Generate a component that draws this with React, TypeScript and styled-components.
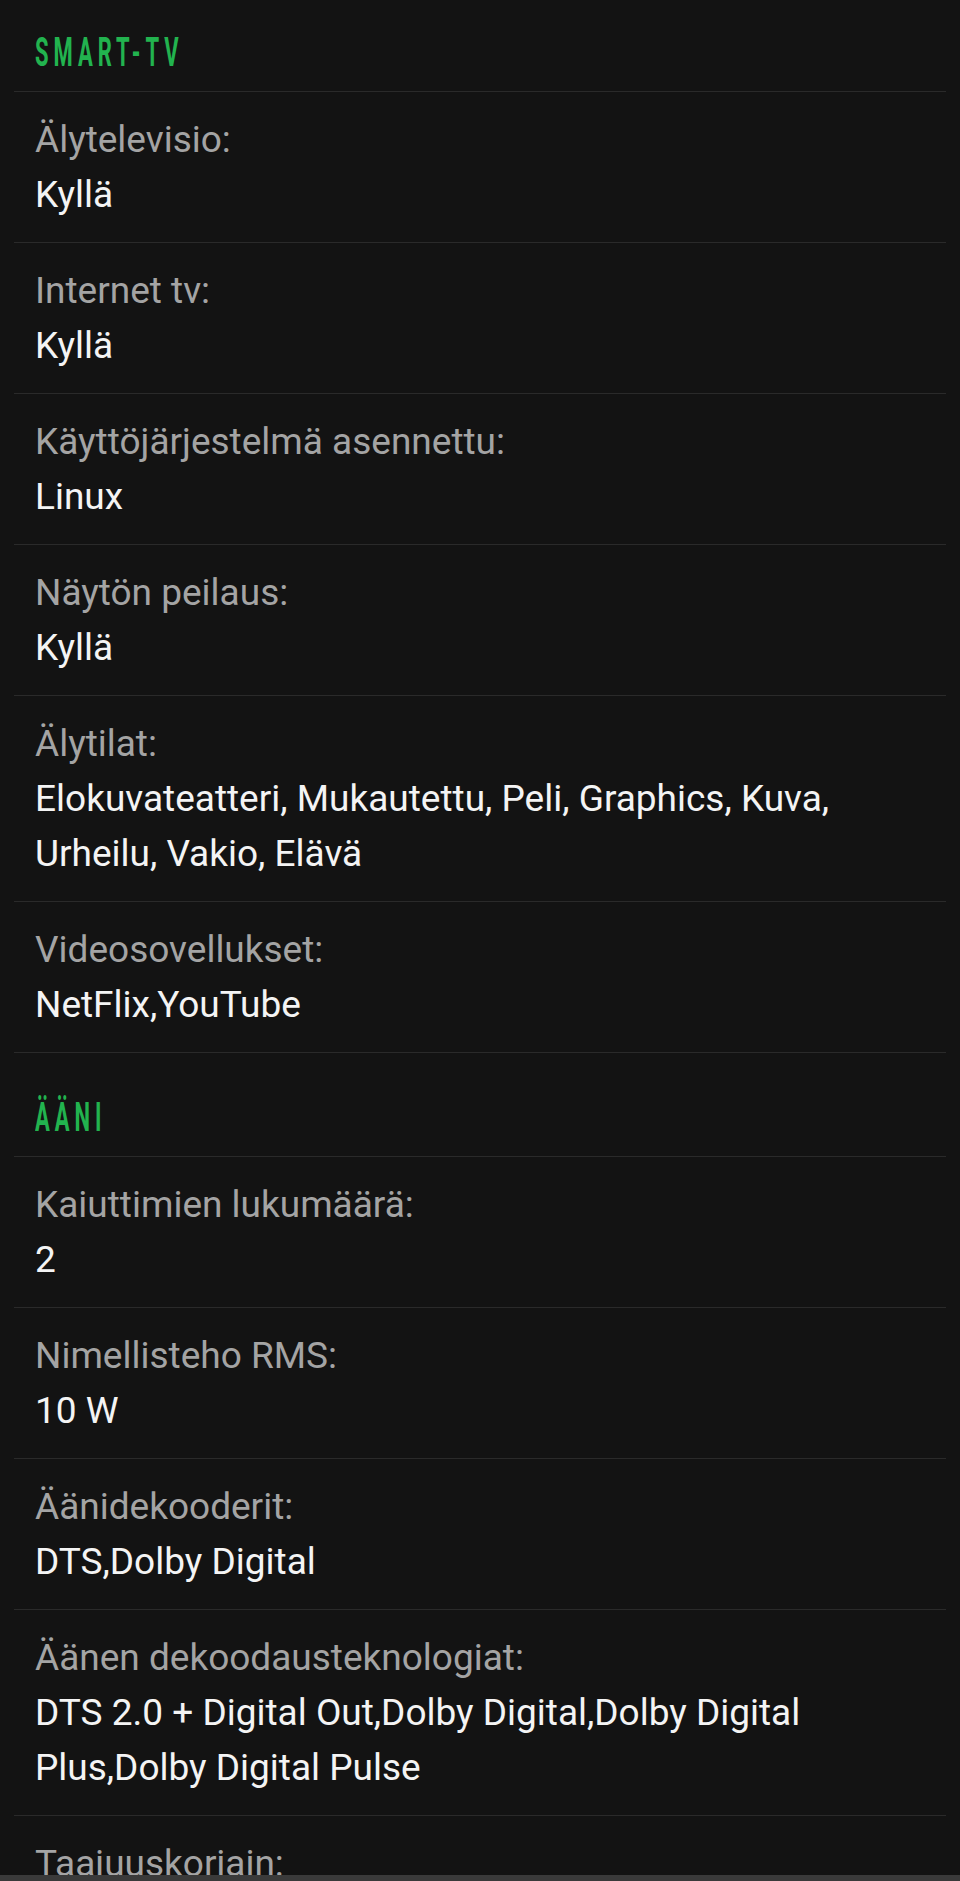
import React from 'react'
import styled, { createGlobalStyle } from 'styled-components'

const GlobalStyle = createGlobalStyle`
  html, body {
    margin: 0;
    padding: 0;
    background: #131313;
  }
  * { box-sizing: border-box; }
`

const Page = styled.div`
  height: 1881px;
  display: flex;
  flex-direction: column;
  overflow: hidden;
  background: #131313;
  font-family: Roboto, "Noto Sans", sans-serif;
`

const List = styled.div`
  flex: 1;
  overflow: hidden;
  padding: 0 14px;
`

const SectionTitle = styled.div<{ $first?: boolean }>`
  padding: ${p => (p.$first ? '28px' : '40px')} 21px 13px;
  border-bottom: 1px solid #2a2a2a;
  height: ${p => (p.$first ? '92px' : '104px')};
`

const TitleText = styled.span`
  display: inline-block;
  font-size: 40px;
  line-height: 50px;
  font-weight: 700;
  letter-spacing: 9px;
  color: #22b34f;
  text-transform: uppercase;
  transform: scaleX(0.55);
  transform-origin: left center;
  white-space: nowrap;
`

const Row = styled.div`
  padding: 20px 21px;
  border-bottom: 1px solid #2a2a2a;
`

const Label = styled.div`
  font-size: 37px;
  line-height: 55px;
  color: #a4a4a4;
`

const Value = styled.div`
  font-size: 37px;
  line-height: 55px;
  color: #f4f4f4;
  padding-right: 40px;
`

const BottomBar = styled.div`
  height: 6px;
  flex-shrink: 0;
  background: #3a3a3a;
`

type Spec = { label: string; value?: string }
type Section = { title: string; rows: Spec[] }

const sections: Section[] = [
  {
    title: 'Smart-TV',
    rows: [
      { label: 'Älytelevisio:', value: 'Kyllä' },
      { label: 'Internet tv:', value: 'Kyllä' },
      { label: 'Käyttöjärjestelmä asennettu:', value: 'Linux' },
      { label: 'Näytön peilaus:', value: 'Kyllä' },
      { label: 'Älytilat:', value: 'Elokuvateatteri, Mukautettu, Peli, Graphics, Kuva, Urheilu, Vakio, Elävä' },
      { label: 'Videosovellukset:', value: 'NetFlix,YouTube' },
    ],
  },
  {
    title: 'Ääni',
    rows: [
      { label: 'Kaiuttimien lukumäärä:', value: '2' },
      { label: 'Nimellisteho RMS:', value: '10 W' },
      { label: 'Äänidekooderit:', value: 'DTS,Dolby Digital' },
      { label: 'Äänen dekoodausteknologiat:', value: 'DTS 2.0 + Digital Out,Dolby Digital,Dolby Digital Plus,Dolby Digital Pulse' },
      { label: 'Taajuuskorjain:', value: 'Kyllä' },
    ],
  },
]

export default function App() {
  return (
    <Page>
      <GlobalStyle />
      <List>
        {sections.map((s, i) => (
          <div key={s.title}>
            <SectionTitle $first={i === 0}>
              <TitleText>{s.title}</TitleText>
            </SectionTitle>
            {s.rows.map(r => (
              <Row key={r.label}>
                <Label>{r.label}</Label>
                {r.value && <Value>{r.value}</Value>}
              </Row>
            ))}
          </div>
        ))}
      </List>
      <BottomBar />
    </Page>
  )
}
